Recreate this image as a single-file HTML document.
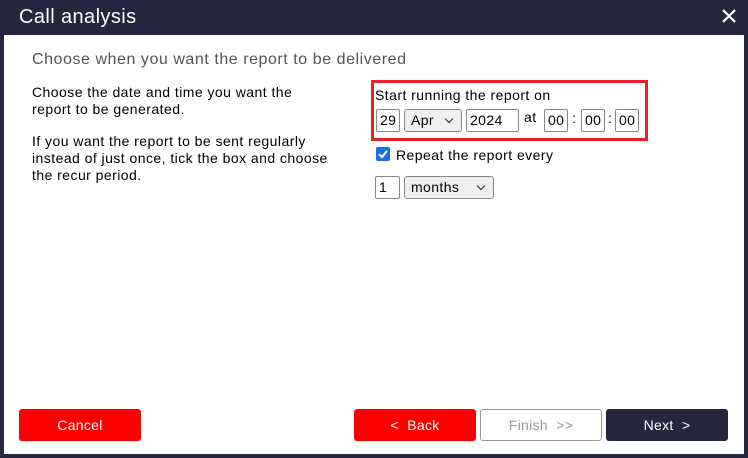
<!DOCTYPE html>
<html><head><style>
*{box-sizing:border-box;margin:0;padding:0}
body{width:748px;height:458px;background:#262640;font-family:"Liberation Sans",sans-serif;position:relative;overflow:hidden}
.t{position:absolute;left:19px;top:6px;color:#fff;font-size:20px;letter-spacing:0.4px}
.x{position:absolute;left:721px;top:8px;width:16px;height:16px}
.c{position:absolute;left:4px;top:35px;width:740px;height:419px;background:#fff}
.a{position:absolute;font-size:14px;color:#000;line-height:17px;letter-spacing:0.45px;white-space:nowrap}
.h{position:absolute;left:32px;top:51px;font-size:16px;color:#555;letter-spacing:0.55px}
.box{position:absolute;left:371px;top:80px;width:277px;height:61px;border:3px solid #e8202a}
.i{position:absolute;height:23px;border:1px solid #888;border-radius:2px;font-size:14px;line-height:21px;padding-left:3px;background:#fff;letter-spacing:0.4px}
.s{position:absolute;height:23px;border:1px solid #888;border-radius:3px;font-size:14px;line-height:21px;padding-left:6px;background:#efefef;letter-spacing:0.4px}
.s:after{content:"";position:absolute;right:9px;top:6px;width:5px;height:5px;border-right:1.5px solid #222;border-bottom:1.5px solid #222;transform:rotate(45deg)}
.b{position:absolute;top:409px;width:122px;height:32px;border-radius:3px;color:#fff;font-size:14px;text-align:center;line-height:32px;letter-spacing:0.3px}
</style></head><body>
<div class="t">Call analysis</div>
<svg class="x" viewBox="0 0 16 16"><path d="M2 2L14 14M14 2L2 14" stroke="#fff" stroke-width="2.2"/></svg>
<div class="c"></div>
<div class="h">Choose when you want the report to be delivered</div>
<div class="a" style="left:32px;top:84px">Choose the date and time you want the<br>report to be generated.</div>
<div class="a" style="left:32px;top:133px">If you want the report to be sent regularly<br>instead of just once, tick the box and choose<br>the recur period.</div>
<div class="box"></div>
<div class="a" style="left:375px;top:87px">Start running the report on</div>
<div class="i" style="left:376px;top:109px;width:24px">29</div>
<div class="s" style="left:404px;top:109px;width:58px">Apr</div>
<div class="i" style="left:466px;top:109px;width:53px">2024</div>
<div class="a" style="left:524px;top:109px">at</div>
<div class="i" style="left:544px;top:109px;width:24px">00</div>
<div class="a" style="left:572px;top:110px">:</div>
<div class="i" style="left:581px;top:109px;width:24px">00</div>
<div class="a" style="left:608px;top:110px">:</div>
<div class="i" style="left:615px;top:109px;width:24px">00</div>
<svg style="position:absolute;left:376px;top:147px" width="14" height="14"><rect width="14" height="14" rx="2" fill="#1a6fe0"/><path d="M3 7.2L6 10L11 4" stroke="#fff" stroke-width="2" fill="none"/></svg>
<div class="a" style="left:396px;top:147px">Repeat the report every</div>
<div class="i" style="left:375px;top:176px;width:25px">1</div>
<div class="s" style="left:404px;top:176px;width:90px">months</div>
<div class="b" style="left:19px;background:#f00">Cancel</div>
<div class="b" style="left:354px;background:#f00">&lt;&nbsp; Back</div>
<div class="b" style="left:480px;background:#fff;border:1px solid #999;color:#999;line-height:30px">Finish &nbsp;&gt;&gt;</div>
<div class="b" style="left:606px;background:#262640">Next &nbsp;&gt;</div>
</body></html>
